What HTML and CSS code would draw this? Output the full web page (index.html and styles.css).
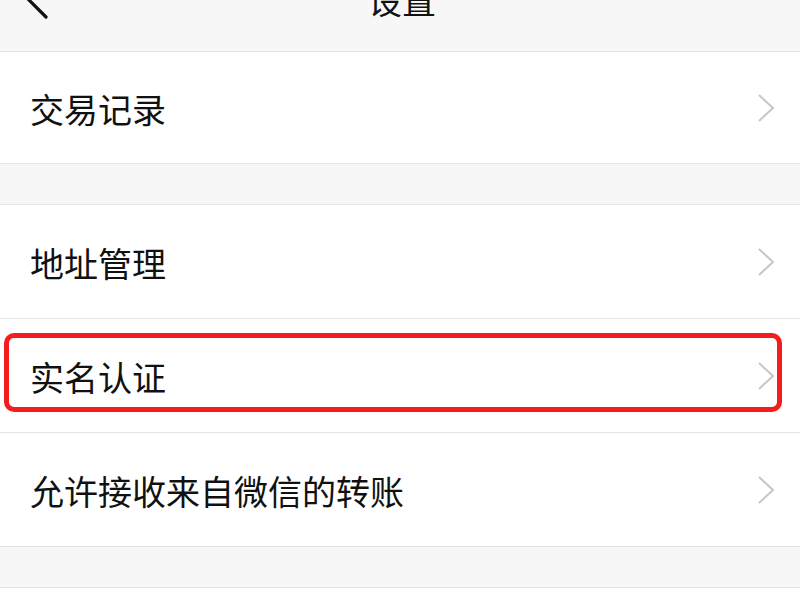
FILE: index.html
```html
<!DOCTYPE html>
<html lang="zh-CN">
<head>
<meta charset="utf-8">
<title>设置</title>
<link rel="stylesheet" href="styles.css">
</head>
<body>
<div class="page">
  <header class="nav">
    <div class="nav-left">
      <svg class="back" width="26" height="44" viewBox="0 0 26 44"><path d="M22 3 L3 22 L22 41" fill="none" stroke="#111" stroke-width="3.2" stroke-linecap="round" stroke-linejoin="round"/></svg>
    </div>
    <div class="nav-title">设置</div>
    <div class="nav-right"></div>
  </header>

  <section class="group">
    <div class="row row-first">
      <span class="label">交易记录</span>
      <svg class="chev" width="20" height="30" viewBox="0 0 20 30"><path d="M3 2 L17 15 L3 28" fill="none" stroke="#c6c6c6" stroke-width="2"/></svg>
    </div>
  </section>

  <div class="gap"></div>

  <section class="group">
    <div class="row">
      <span class="label">地址管理</span>
      <svg class="chev" width="20" height="30" viewBox="0 0 20 30"><path d="M3 2 L17 15 L3 28" fill="none" stroke="#c6c6c6" stroke-width="2"/></svg>
    </div>
    <div class="row row-mark">
      <span class="label">实名认证</span>
      <svg class="chev" width="20" height="30" viewBox="0 0 20 30"><path d="M3 2 L17 15 L3 28" fill="none" stroke="#c6c6c6" stroke-width="2"/></svg>
      <div class="highlight"></div>
    </div>
    <div class="row">
      <span class="label">允许接收来自微信的转账</span>
      <svg class="chev" width="20" height="30" viewBox="0 0 20 30"><path d="M3 2 L17 15 L3 28" fill="none" stroke="#c6c6c6" stroke-width="2"/></svg>
    </div>
  </section>

  <div class="gap"></div>
</div>
</body>
</html>
```

FILE: styles.css
```css
html, body {
  margin: 0;
  padding: 0;
  background: #ffffff;
}

body {
  font-family: "Noto Sans CJK SC", "Noto Sans", sans-serif;
  color: #111111;
}

.page {
  width: 800px;
  height: 600px;
  overflow: hidden;
}

.nav {
  height: 51px;
  background: #f7f7f7;
  border-bottom: 1px solid #e4e4e4;
  display: grid;
  grid-template-columns: 1fr auto 1fr;
  align-items: start;
  overflow: hidden;
}

.back {
  display: block;
  margin-top: -24px;
  margin-left: 24px;
}

.nav-title {
  font-size: 34px;
  line-height: 34px;
  margin-top: -17px;
  padding-left: 4px;
  color: #111111;
}

.group {
  background: #ffffff;
}

.row {
  height: 113px;
  border-bottom: 1px solid #e5e5e5;
  display: flex;
  align-items: center;
  justify-content: space-between;
  padding: 0 24px 0 30px;
  position: relative;
}

.row-first {
  height: 111px;
}

.label {
  font-size: 34px;
  line-height: 1;
  color: #111111;
  padding-top: 3px;
}

.chev {
  display: block;
}

.gap {
  height: 40px;
  background: #f7f7f7;
  border-bottom: 1px solid #e5e5e5;
}

.highlight {
  position: absolute;
  left: 4px;
  top: 14px;
  width: 768px;
  height: 69px;
  border: 5.5px solid #f41c1c;
  border-radius: 10px;
  pointer-events: none;
}
```
